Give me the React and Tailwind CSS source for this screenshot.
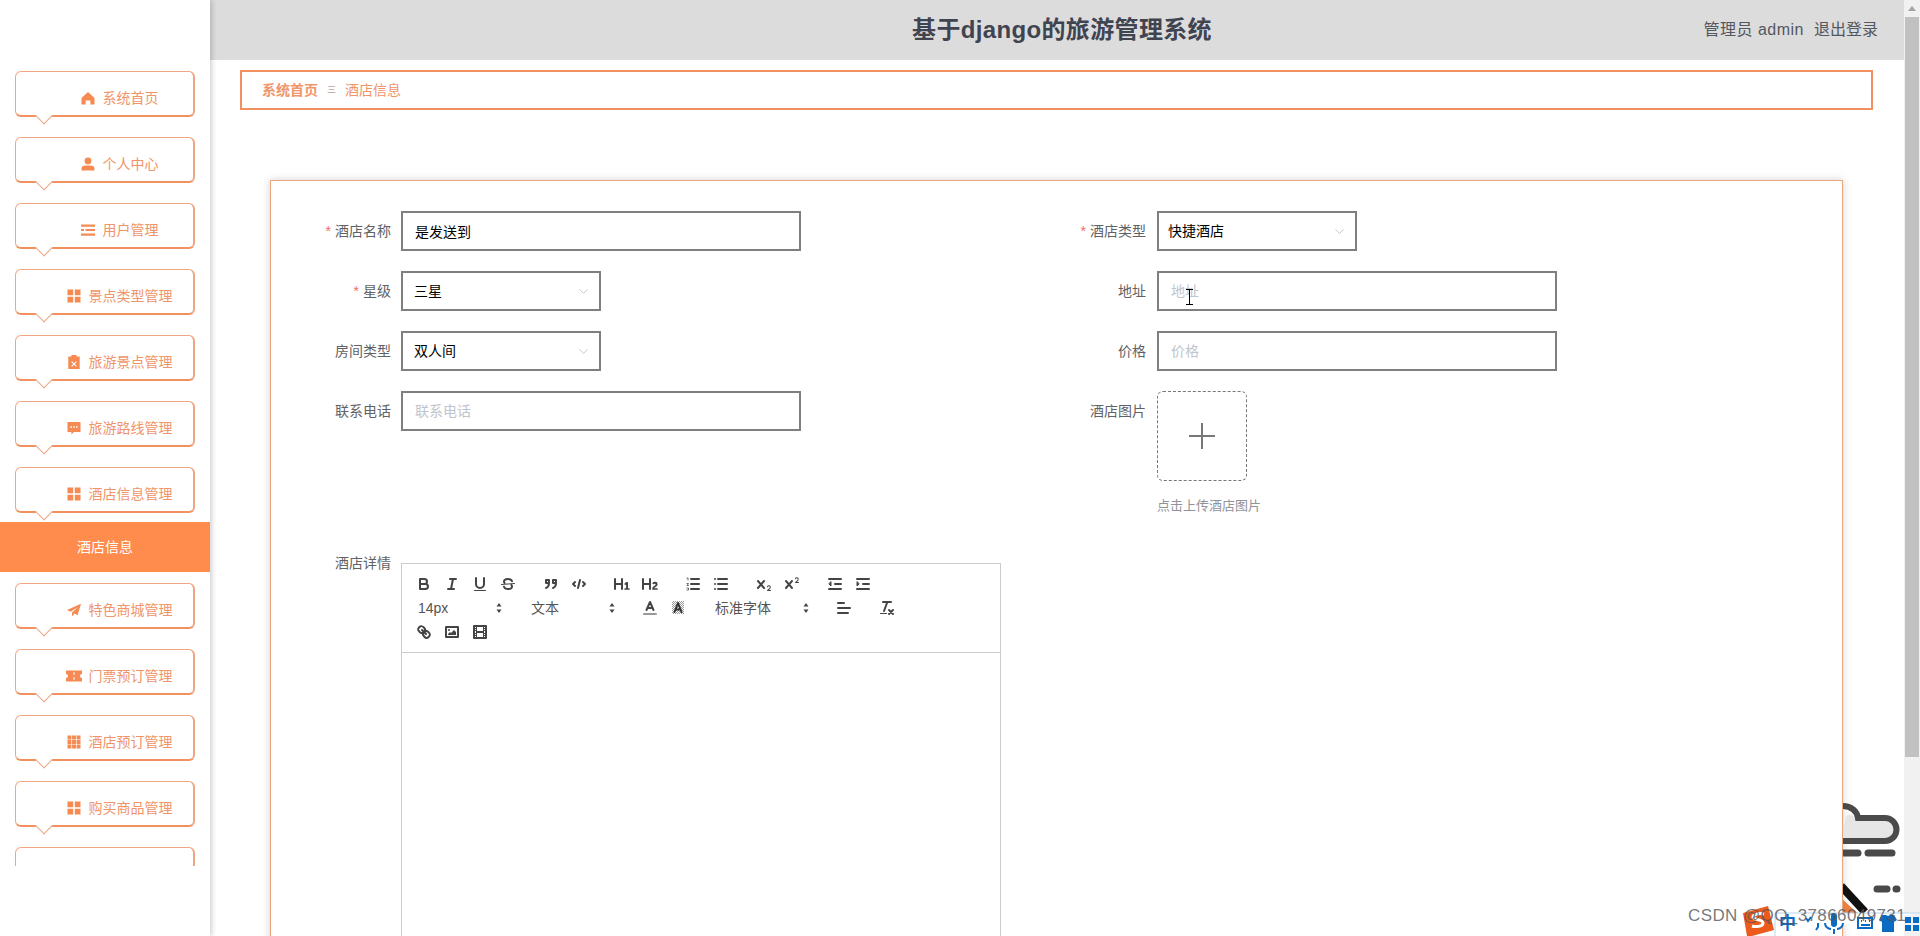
import { ChevronDown } from 'lucide-react';

// 14px sidebar glyphs, all filled with the nav orange
const icons = {
    home: <path d="M7 1 13.5 7v6a.6.6 0 0 1-.6.6H9.4V9.4H4.6v4.2H1.1a.6.6 0 0 1-.6-.6V7Z" />,
    user: <path d="M7 .5a3.4 3.4 0 1 1 0 6.8A3.4 3.4 0 0 1 7 .5ZM.5 11.2C.5 9.3 2.6 8.4 4.5 8.4h5c1.9 0 4 .9 4 2.8v2.3H.5Z" />,
    lines: <path d="M0 1.5h14v2.2H0ZM0 6h3v2H0Zm4.5 0H14v2H4.5ZM0 10.5h14v2.2H0Z" />,
    grid: <path d="M.5.5h5.7v5.7H.5Zm7.3 0h5.7v5.7H7.8ZM.5 7.8h5.7v5.7H.5Zm7.3 0h5.7v5.7H7.8Z" />,
    clip: <path fillRule="evenodd" d="M4.5 0h5v1.6h3.2V14H1.3V1.6h3.2ZM5 6.2l-.8.8L6.2 9l-2 2 .8.8 2-2 2 2 .8-.8-2-2 2-2-.8-.8-2 2Z" />,
    chat: <path fillRule="evenodd" d="M.5 1h13v10H7l-2.6 2.5V11H.5ZM3.4 5.2v1.6H5V5.2Zm2.8 0v1.6h1.6V5.2Zm2.8 0v1.6h1.6V5.2Z" />,
    send: <path d="M14 .8 0 7l3.6 1.8L11 4 5 9.6v4l2.6-3 3 1.6Z" />,
    ticket: <path fillRule="evenodd" d="M-1 1.500h16v3.500a2 2 0 0 0 0 4v3.500H-1V9a2 2 0 0 0 0-4ZM6.400 3.200v2.600h1.200V3.200Zm0 5v2.600h1.200V8.200Z" />,
    dots: <path d="M.5.5h3.9v3.9H.5Zm4.55 0h3.9v3.9h-3.9Zm4.55 0h3.9v3.9H9.6ZM.5 5.05h3.9v3.9H.5Zm4.55 0h3.9v3.9h-3.9Zm4.55 0h3.9v3.9H9.6ZM.5 9.6h3.9v3.9H.5Zm4.55 0h3.9v3.9h-3.9Zm4.55 0h3.9v3.9H9.6Z" />,
};

const navTop = [
    ['home', '系统首页'],
    ['user', '个人中心'],
    ['lines', '用户管理'],
    ['grid', '景点类型管理'],
    ['clip', '旅游景点管理'],
    ['chat', '旅游路线管理'],
    ['grid', '酒店信息管理'],
];

const navBottom = [
    ['send', '特色商城管理'],
    ['ticket', '门票预订管理'],
    ['dots', '酒店预订管理'],
    ['grid', '购买商品管理'],
    [null, ''],
];

function NavButton({ icon, label }) {
    return (
        <div className="relative mx-[15px] mb-5 h-[46px] rounded-md border border-[#f2a582] border-r-2 border-b-2 border-b-[#f0915f] bg-white">
            <div className="flex h-full items-center justify-center gap-2 pt-2 pl-[30px] text-sm text-[#f0946a]">
                {icon && (
                    <svg viewBox="0 0 14 14" className="h-3.5 w-3.5 shrink-0 overflow-visible fill-[#f58a52]">
                        {icons[icon]}
                    </svg>
                )}
                <span>{label}</span>
            </div>
            <div className="absolute top-[38px] left-[22px] h-3 w-3 rotate-45 border-r border-b border-[#f2a582] bg-white" />
        </div>
    );
}

function Sidebar() {
    return (
        <aside className="relative z-20 h-full w-[210px] shrink-0 bg-white shadow-[2px_0_5px_rgba(0,0,0,0.18)]">
            <div className="h-[866px] overflow-hidden pt-[71px]">
                {navTop.map(([icon, label]) => (
                    <NavButton key={label} icon={icon} label={label} />
                ))}
                <div className="-mt-[11px] mb-[11px] flex h-[50px] items-center justify-center bg-[#ff8b4d] text-sm text-white">
                    酒店信息
                </div>
                {navBottom.map(([icon, label]) => (
                    <NavButton key={label || 'more'} icon={icon} label={label} />
                ))}
            </div>
        </aside>
    );
}

function Label({ text, required, width = 'w-[120px]' }) {
    return (
        <label className={`shrink-0 pt-2.5 text-right text-sm leading-5 text-[#606266] ${width}`}>
            {required && <span className="mr-1 text-[#f56c6c]">*</span>}
            {text}
        </label>
    );
}

function TextField({ label, required, value, placeholder, width }) {
    return (
        <div className="flex h-10 flex-1 justify-end gap-[9px]">
            <Label text={label} required={required} width={width} />
            <input
                readOnly
                value={value || ''}
                placeholder={placeholder}
                className="ml-auto h-10 w-[400px] border-2 border-[#7f7f7f] bg-white pl-3 text-sm text-black outline-none placeholder:text-[#c0c4cc]"
            />
        </div>
    );
}

function SelectField({ label, required, value, width, pad = 'pl-[11px]' }) {
    return (
        <div className="flex h-10 gap-[9px]">
            <Label text={label} required={required} width={width} />
            <div className={`ml-auto flex h-10 w-[200px] items-center justify-between border-2 border-[#7f7f7f] bg-white pr-2 text-sm text-black ${pad}`}>
                <span>{value}</span>
                <ChevronDown className="h-[15px] w-[15px] text-[#c0c4cc]" strokeWidth={1.5} />
            </div>
        </div>
    );
}

function Btn({ children, fill }) {
    return (
        <span className="flex h-6 w-7 items-center justify-center">
            <svg
                viewBox="0 0 18 18"
                className="h-[18px] w-[18px]"
                fill={fill ? '#444' : 'none'}
                stroke={fill ? 'none' : '#444'}
                strokeWidth="2"
                strokeLinecap="round"
                strokeLinejoin="round"
            >
                {children}
            </svg>
        </span>
    );
}

function Picker({ label, width }) {
    return (
        <span className={`relative flex h-6 items-center pl-2 text-sm leading-none text-[#555] ${width}`}>
            {label}
            <svg viewBox="0 0 18 18" className="absolute top-[3px] right-0 h-[18px] w-[18px] fill-[#444]">
                <path d="M6.500 10.500h5L9 14ZM6.500 7.500 9 4l2.500 3.500Z" />
            </svg>
        </span>
    );
}

function Toolbar() {
    return (
        <div className="flex flex-wrap border-b border-[#ccc] p-2">
            <span className="mr-[15px] flex">
                <Btn><path d="M5 4h4.5a2.5 2.5 0 0 1 0 5H5Z" /><path d="M5 9h5.5a2.5 2.5 0 0 1 0 5H5Z" /></Btn>
                <Btn><path d="M7 4h6M5 14h6M8 14l2-10" /></Btn>
                <Btn><path d="M5 3v6a4 4 0 0 0 8 0V3" /><path d="M3.5 15.5h11" strokeWidth="1" /></Btn>
                <Btn>
                    <path d="M15.5 8.5 2.5 9.5" strokeWidth="1" />
                    <path d="M13 6.2C12.6 5 11 4 9 4 6.800 4 5 5.100 5 6.500c0 .7.2 1.200.6 1.600M5 11.800C5.400 13 7 14 9 14c2.200 0 4-1.100 4-2.500 0-.7-.2-1.200-.6-1.600" />
                </Btn>
            </span>
            <span className="mr-[15px] flex">
                <Btn><path d="M4 5h3v3H4Zm7 0h3v3h-3ZM7 8c0 4-3 5-3 5M14 8c0 4-3 5-3 5" /></Btn>
                <Btn><path d="M5 7 3 9l2 2M13 7l2 2-2 2M10 5 8 13" /></Btn>
            </span>
            <span className="mr-[15px] flex">
                <Btn fill><path d="M10 4v10a1 1 0 0 1-2 0v-4H3v4a1 1 0 0 1-2 0V4a1 1 0 0 1 2 0v4h5V4a1 1 0 0 1 2 0Zm6.070 9.200h-1.080V7.600a.54.54 0 0 0-.6-.6h-.63a1 1 0 0 0-.75.3l-1.370 1.270a.54.54 0 0 0 0 .86l.29.3a.54.54 0 0 0 .85.03l.1-.09a1.200 1.200 0 0 0 .24-.35s-.01.31-.01.6v3.290H12a.54.54 0 0 0-.6.6v.44a.54.54 0 0 0 .6.6h4.070a.54.54 0 0 0 .6-.6v-.44a.54.54 0 0 0-.6-.6Z" /></Btn>
                <Btn fill><path d="M16.740 13.810v.44a.54.54 0 0 1-.6.6h-4.290a.58.58 0 0 1-.65-.6v-.24c0-2.900 3.400-3.420 3.400-4.550a.78.78 0 0 0-.85-.78 1.180 1.180 0 0 0-.84.38c-.27.26-.56.37-.86.13l-.43-.34c-.31-.24-.38-.52-.15-.81a2.970 2.970 0 0 1 2.450-1.180 2.450 2.450 0 0 1 2.680 2.410c0 2.450-3.180 2.930-3.280 3.940h2.800a.54.54 0 0 1 .61.6ZM9 3a1 1 0 0 0-1 1v4H3V4a1 1 0 0 0-2 0v10a1 1 0 0 0 2 0v-4h5v4a1 1 0 0 0 2 0V4a1 1 0 0 0-1-1Z" /></Btn>
            </span>
            <span className="mr-[15px] flex">
                <Btn><path d="M7 4h8M7 9h8M7 14h8" /><path d="M3 3h1v2M3 8.500h1.500L3 10.500h1.500M3 13h1.500v2H3" strokeWidth="0.8" /></Btn>
                <Btn><path d="M6 4h9M6 9h9M6 14h9M3 4h0M3 9h0M3 14h0" /></Btn>
            </span>
            <span className="mr-[15px] flex">
                <Btn fill><path d="M9.650 5.240a1 1 0 0 0-1.410.11L6 7.960 3.760 5.350a1 1 0 0 0-1.520 1.300L4.680 9.500l-2.440 2.850a1 1 0 0 0 1.520 1.300L6 11.040l2.240 2.610a1 1 0 1 0 1.520-1.300L7.320 9.500l2.440-2.850a1 1 0 0 0-.11-1.410ZM15.500 15h-1.640a3.860 3.860 0 0 0 1.910-2.970 1.800 1.800 0 0 0-1.600-1.760 1.920 1.920 0 0 0-2.150 1.430.5.5 0 1 0 .96.290.91.91 0 0 1 1.050-.72.81.81 0 0 1 .74.76c0 1.080-1.170 1.870-1.940 2.430A1.460 1.460 0 0 0 12 15.500a.5.5 0 0 0 .5.5h3a.5.5 0 0 0 0-1Z" /></Btn>
                <Btn fill><path d="M9.650 5.240a1 1 0 0 0-1.410.11L6 7.960 3.760 5.350a1 1 0 0 0-1.520 1.300L4.680 9.500l-2.440 2.850a1 1 0 0 0 1.520 1.300L6 11.040l2.240 2.610a1 1 0 1 0 1.520-1.300L7.320 9.500l2.440-2.850a1 1 0 0 0-.11-1.410ZM15.500 7h-1.640a4 4 0 0 0 1.910-2.970 1.800 1.800 0 0 0-1.600-1.760 1.920 1.920 0 0 0-2.150 1.430.5.5 0 1 0 .96.290.92.92 0 0 1 1.050-.72.81.81 0 0 1 .74.76c0 1.080-1.160 1.920-1.930 2.490A1.420 1.420 0 0 0 12 7.500a.5.5 0 0 0 .5.5h3a.5.5 0 0 0 0-1Z" /></Btn>
            </span>
            <span className="mr-[15px] flex">
                <Btn><path d="M3 14h12M3 4h12M9 9h6" /><path d="M5 7v4L3 9Z" fill="#444" strokeWidth="1" /></Btn>
                <Btn><path d="M3 14h12M3 4h12M9 9h6" /><path d="M3 7v4l2-2Z" fill="#444" strokeWidth="1" /></Btn>
            </span>
            <Picker label="14px" width="mr-[15px] w-[98px]" />
            <Picker label="文本" width="mr-[15px] w-[98px]" />
            <span className="mr-[15px] flex">
                <Btn><path d="M5.500 11 9 3l3.500 8M11.630 9H6.380" /><path d="M3 15h12" stroke="#999" /></Btn>
                <Btn>
                    <defs>
                        <pattern id="hatch" width="2" height="2" patternUnits="userSpaceOnUse">
                            <path d="M0 0h1v1H0Zm1 1h1v1H1Z" fill="#999" stroke="none" />
                        </pattern>
                    </defs>
                    <path d="M3 2h12v13H3Z" fill="url(#hatch)" stroke="none" />
                    <path d="M5.500 13 9 4l3.500 9M11.630 10.500H6.380" stroke="#333" />
                </Btn>
            </span>
            <Picker label="标准字体" width="mr-[15px] w-[108px]" />
            <span className="mr-[15px] flex">
                <Btn><path d="M3 9h12M3 14h10M3 4h6" /></Btn>
            </span>
            <span className="flex">
                <Btn><path d="M5 3h8M6 12 9.350 3M11 11l4 4M15 11l-4 4" /><path d="M2.500 14.500h6" strokeWidth="1" /></Btn>
            </span>
            <span className="flex w-full">
                <Btn>
                    <path d="M7 7l4 4" />
                    <path d="M8.900 4.580a3.480 3.480 0 0 1 .36 4.680A3.480 3.480 0 0 1 4.580 8.900C3.190 7.500 2.040 6.400 4.220 4.220S7.500 3.190 8.900 4.580Z" />
                    <path d="M13.420 9.100a3.480 3.480 0 0 0-4.680-.36 3.480 3.480 0 0 0 .36 4.680c1.390 1.390 2.500 2.540 4.680.36s1.030-3.280-.36-4.680Z" />
                </Btn>
                <Btn>
                    <path d="M3 4h12v10H3Z" />
                    <circle cx="6" cy="7" r="1" fill="#444" stroke="none" />
                    <path d="M5 12v-1l2-2 1 1 3-3 2 2v3Z" fill="#444" stroke="none" />
                </Btn>
                <Btn>
                    <path d="M3 3h12v12H3Z" />
                    <path d="M5 3h1v12H5Zm7 0h1v12h-1ZM5 8h8v2H5ZM3 5h3v1H3Zm0 2h3v1H3Zm0 3h3v1H3Zm0 2h3v1H3Zm9-7h3v1h-3Zm0 2h3v1h-3Zm0 3h3v1h-3Zm0 2h3v1h-3Z" fill="#444" stroke="none" />
                </Btn>
            </span>
        </div>
    );
}

function HotelForm() {
    return (
        <div className="ml-[60px] h-[800px] w-[1573px] border border-[#e8a67c] bg-white pt-[30px] shadow-[0_0_8px_rgba(0,0,0,0.18)]">
            <div className="flex">
                <div className="flex w-[757px] flex-col gap-5">
                    <div className="flex w-[530px]">
                        <TextField label="酒店名称" required value="是发送到" />
                    </div>
                    <div className="w-[330px]">
                        <SelectField label="星级" required value="三星" />
                    </div>
                    <div className="w-[330px]">
                        <SelectField label="房间类型" value="双人间" />
                    </div>
                    <div className="flex w-[530px]">
                        <TextField label="联系电话" placeholder="联系电话" />
                    </div>
                </div>
                <div className="flex flex-col gap-5">
                    <div className="w-[329px]">
                        <SelectField label="酒店类型" required value="快捷酒店" pad="pl-[9px]" width="w-[118px]" />
                    </div>
                    <div className="flex w-[529px]">
                        <TextField label="地址" placeholder="地址" width="w-[118px]" />
                    </div>
                    <div className="flex w-[529px]">
                        <TextField label="价格" placeholder="价格" width="w-[118px]" />
                    </div>
                    <div className="flex gap-[11px]">
                        <Label text="酒店图片" width="w-[118px]" />
                        <div>
                            <div className="flex h-[90px] w-[90px] items-center justify-center rounded-md border border-dashed border-[#777]">
                                <svg viewBox="0 0 28 28" className="h-7 w-7 stroke-[#777]" strokeWidth="2">
                                    <path d="M14 1v26M1 14h26" />
                                </svg>
                            </div>
                            <p className="mt-4 text-[13px] leading-[18px] text-[#909399]">点击上传酒店图片</p>
                        </div>
                    </div>
                </div>
            </div>
            <div className="mt-[48px] flex gap-[10px]">
                <label className="-mt-2.5 w-[120px] shrink-0 text-right text-sm leading-5 text-[#606266]">酒店详情</label>
                <div className="h-[500px] w-[600px] border border-[#ccc]">
                    <Toolbar />
                </div>
            </div>
        </div>
    );
}

function Scrollbar() {
    return (
        <div className="flex h-full w-4 shrink-0 flex-col items-center bg-[#f1f1f1]">
            <div className="flex h-[17px] items-center">
                <div className="h-0 w-0 border-x-4 border-b-[5px] border-x-transparent border-b-[#a3a3a3]" />
            </div>
            <div className="h-[740px] w-[14px] bg-[#c1c1c1]" />
        </div>
    );
}

// Floating bits at the corner: decoration, watermark and the IME bar
function CornerOverlay() {
    return (
        <>
            <svg viewBox="0 0 62 120" className="absolute top-[800px] left-[1843px] z-10 h-[120px] w-[62px]">
                <path d="M-6 24h8C2 15 6 10 14 20h30a11 11 0 0 1 0 23H-6Z" fill="#e6e6e6" />
                <path d="M0 6c8 0 14 5 15 12h27a11.500 11.500 0 0 1 0 23H-2" fill="none" stroke="#4a4a4a" strokeWidth="6" />
                <path d="M-2 53h17M25 53h24" stroke="#4a4a4a" strokeWidth="7" strokeLinecap="round" />
                <path d="M34 89h10M53 89h1" stroke="#4a4a4a" strokeWidth="7" strokeLinecap="round" />
                <path d="M-2 98 22 120H-2Z" fill="#e98145" />
                <path d="M-2 86 22 112" stroke="#111" strokeWidth="8" />
            </svg>
            <svg viewBox="0 0 175 24" className="absolute top-[912px] left-[1745px] z-30 h-6 w-[175px]">
                <path d="M30 24V1h145" fill="#fff" stroke="#b8d4ee" />
                <g stroke="#0a6bc4" strokeWidth="2" fill="none">
                    <path d="M61 6l2 3 3-4" />
                    <path d="M73 11v4l-2 3" />
                    <path d="M86 17a6 6 0 0 1-6-6M98 11a6 6 0 0 1-6 6M89 17v5" />
                    <path d="M113 6h14v10h-14ZM116 9h1M120 9h1M124 9h1M116 13h9" />
                </g>
                <rect x="86" y="1" width="6" height="14" rx="3" fill="#0a6bc4" />
                <path d="M137 3h4l2 1 2-1h4l3 5-3 2v10h-12V10l-3-2Z" fill="#0a6bc4" />
                <path d="M160 5h6v6h-6Zm8 0h6v6h-6Zm-8 8h6v6h-6Zm8 0h6v6h-6Z" fill="#0a6bc4" />
            </svg>
            <span className="absolute top-[913px] left-[1779px] z-30 text-[17px] leading-[22px] font-bold text-[#0a6bc4]">中</span>
            <svg viewBox="0 0 32 30" className="absolute top-[906px] left-[1742px] z-30 h-[30px] w-8">
                <path d="M1 7 26 0l6 24-22 6H5Z" fill="#ec5a1c" />
                <path d="M22 8c-4-1-11 0-11 3s10 2 10 6-8 4-11 3" fill="none" stroke="#fff" strokeWidth="3" />
            </svg>
            <span className="absolute top-[906px] left-[1688px] z-40 font-['Liberation_Sans',sans-serif] text-[17px] leading-5 tracking-[0.4px] whitespace-nowrap text-[#555]/80">
                CSDN @QQ_37866049731
            </span>
            {/* mouse cursor over the address field */}
            <svg viewBox="0 0 9 16" className="absolute top-[289px] left-[1185px] z-40 h-4 w-[9px] fill-none stroke-black" strokeWidth="1">
                <path d="M1 .5h7M4.500.5v15M1 15.500h7" />
            </svg>
        </>
    );
}

export default function App() {
    return (
        <div className="relative flex h-[936px] w-[1920px] overflow-hidden bg-white font-['Liberation_Sans','Noto_Sans_CJK_SC',sans-serif]">
            <Sidebar />
            <main className="h-full min-w-0 flex-1 overflow-hidden">
                <header className="grid h-[60px] grid-cols-[1fr_auto_1fr] items-center bg-[#dddcdd] pr-[26px] pl-9">
                    <span />
                    <h1 className="text-2xl font-bold tracking-[0.35px] text-[#3f4450]">基于django的旅游管理系统</h1>
                    <div className="flex justify-end gap-[10px] text-base text-[#53575f]">
                        <span className="tracking-[0.5px]">管理员 admin</span>
                        <span>退出登录</span>
                    </div>
                </header>
                <div className="mt-[10px] mr-[31px] ml-[30px] flex h-10 items-center border-2 border-[#f0915f] pl-5 text-sm text-[#f0946a]">
                    <span className="font-bold">系统首页</span>
                    <span className="mx-[9px] text-[9px] text-[#b9a79c]">三</span>
                    <span>酒店信息</span>
                </div>
                <div className="mt-[70px]">
                    <HotelForm />
                </div>
            </main>
            <Scrollbar />
            <CornerOverlay />
        </div>
    );
}
